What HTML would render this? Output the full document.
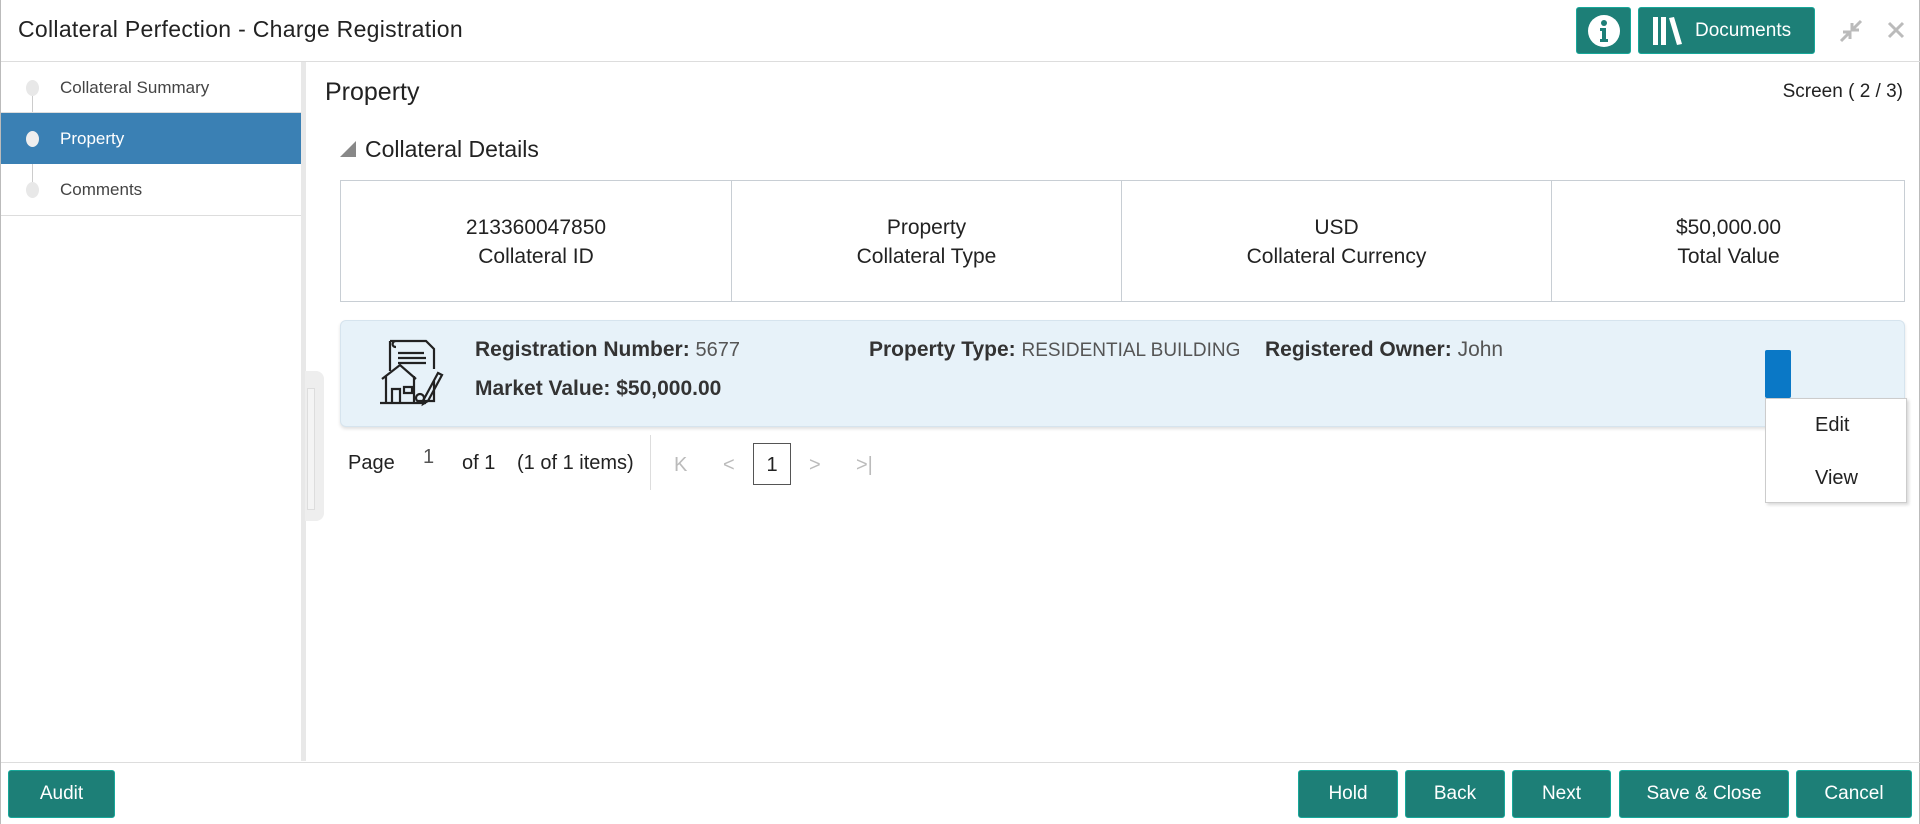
<!DOCTYPE html>
<html><head><style>
*{box-sizing:border-box;margin:0;padding:0}
body{width:1920px;height:824px;overflow:hidden;background:#fff;font-family:"Liberation Sans",sans-serif;color:#222;position:relative;border-left:1px solid #bbb;border-right:1px solid #bbb}
.a{position:absolute;white-space:nowrap}
.btn{position:absolute;background:#1d7f77;border:1px solid #17a89a;border-radius:3px;color:#fff;font-size:19px;display:flex;align-items:center;justify-content:center}
.cell{position:absolute;top:0;height:100%;text-align:center;font-size:21px;line-height:29px;padding-top:32px}
</style></head><body>
<div class="a" style="left:17px;top:16px;font-size:23px;color:#222;letter-spacing:0.3px">Collateral Perfection - Charge Registration</div>
<div class="btn" style="left:1575px;top:7px;width:55px;height:47px"><svg width="34" height="34" viewBox="0 0 34 34"><circle cx="17" cy="17" r="16" fill="#fff"/><circle cx="17" cy="9" r="3" fill="#1d7f77"/><path d="M13 14h6v11h2v3h-8v-3h2v-8h-2z" fill="#1d7f77"/></svg></div>
<div class="btn" style="left:1637px;top:7px;width:177px;height:47px;justify-content:flex-start;padding-left:14px"><svg width="32" height="30" viewBox="0 0 32 30"><rect x="0" y="1" width="5" height="28" fill="#fff"/><rect x="8" y="1" width="5" height="28" fill="#fff"/><path d="M16 2l5-1 8 27-5 1z" fill="#fff"/></svg><span style="margin-left:10px">Documents</span></div>
<svg class="a" style="left:1838px;top:19px" width="24" height="24" viewBox="0 0 24 24"><path d="M2 22l8-8M4 13h7v7M22 2l-8 8M13 4v7h7" stroke="#bbb" stroke-width="3" fill="none"/></svg>
<svg class="a" style="left:1886px;top:21px" width="18" height="18" viewBox="0 0 18 18"><path d="M2 2l14 14M16 2L2 16" stroke="#bbb" stroke-width="3"/></svg>
<div class="a" style="left:0;top:61px;width:1920px;height:1px;background:#ddd"></div>
<div class="a" style="left:300px;top:62px;width:5px;height:699px;background:#e8e8e8"></div>
<div class="a" style="left:31px;top:80px;width:1px;height:110px;background:#ccc"></div>
<div class="a" style="left:0;top:113px;width:300px;height:51px;background:#3a80b4"></div>
<div class="a" style="left:0;top:112px;width:300px;height:1px;background:#ddd"></div>
<div class="a" style="left:0;top:215px;width:300px;height:1px;background:#ddd"></div>
<div class="a" style="left:25px;top:80px;width:13px;height:16px;border-radius:50%;background:#e8e8e8"></div>
<div class="a" style="left:25px;top:131px;width:13px;height:16px;border-radius:50%;background:#eee"></div>
<div class="a" style="left:25px;top:182px;width:13px;height:16px;border-radius:50%;background:#e8e8e8"></div>
<div class="a" style="left:59px;top:78px;font-size:17px;color:#444">Collateral Summary</div>
<div class="a" style="left:59px;top:129px;font-size:17px;color:#fff">Property</div>
<div class="a" style="left:59px;top:180px;font-size:17px;color:#444">Comments</div>
<div class="a" style="left:304px;top:371px;width:19px;height:150px;background:#eee;border-radius:0 8px 8px 0"></div>
<div class="a" style="left:306px;top:388px;width:8px;height:122px;border:1px solid #ddd;background:#f4f4f4"></div>
<div class="a" style="left:324px;top:78px;font-size:25px;color:#222">Property</div>
<div class="a" style="right:16px;top:81px;font-size:19px;color:#222">Screen ( 2 / 3)</div>
<svg class="a" style="left:339px;top:141px" width="16" height="16"><path d="M16 0V16H0z" fill="#888"/></svg>
<div class="a" style="left:364px;top:136px;font-size:23px;color:#222">Collateral Details</div>
<div class="a" style="left:339px;top:180px;width:1565px;height:122px;border:1px solid #c8ced4">
 <div class="cell" style="left:0;width:390px">213360047850<br>Collateral ID</div>
 <div class="cell" style="left:390px;width:390px;border-left:1px solid #c8ced4">Property<br>Collateral Type</div>
 <div class="cell" style="left:780px;width:430px;border-left:1px solid #c8ced4">USD<br>Collateral Currency</div>
 <div class="cell" style="left:1210px;width:354px;border-left:1px solid #c8ced4">$50,000.00<br>Total Value</div>
</div>
<div class="a" style="left:339px;top:320px;width:1565px;height:107px;background:#e7f2f9;border:1px solid #d6e4ee;border-radius:6px;box-shadow:0 2px 3px rgba(0,0,0,.12)"></div>
<svg class="a" style="left:377px;top:337px" width="72" height="72" viewBox="0 0 72 72" fill="none" stroke="#222" stroke-width="2.2"><path d="M12 4h36l8 8v20M12 4v30M18 4c-4 0-5 6 0 6M20 16h26M20 21h28M20 26h28M56 44v20H40"/><path d="M4 42L22 28 38 42M8 39v27h28V39M14 66V52h8v14M26 50h8v6h-8zM2 66h46"/><path d="M46 62l14-26 4 2-14 26-5 3z"/><circle cx="42" cy="61" r="4"/></svg>
<div class="a" style="left:474px;top:338px;font-size:21px"><b style="color:#333">Registration Number:</b> <span style="color:#555;font-size:20px">5677</span></div>
<div class="a" style="left:474px;top:377px;font-size:21px;color:#333"><b>Market Value: $50,000.00</b></div>
<div class="a" style="left:868px;top:338px;font-size:21px"><b style="color:#333">Property Type:</b> <span style="color:#555;font-size:19px">RESIDENTIAL BUILDING</span></div>
<div class="a" style="left:1264px;top:338px;font-size:21px"><b style="color:#333">Registered Owner:</b> <span style="color:#555">John</span></div>
<div class="a" style="left:1764px;top:350px;width:26px;height:48px;background:#0a78c6;border-radius:2px"></div>
<div class="a" style="left:1764px;top:398px;width:142px;height:105px;background:#fff;border:1px solid #ccc;box-shadow:2px 2px 3px rgba(0,0,0,.15)"></div>
<div class="a" style="left:1814px;top:414px;font-size:20px">Edit</div>
<div class="a" style="left:1814px;top:467px;font-size:20px">View</div>
<div class="a" style="left:347px;top:452px;font-size:20px">Page</div>
<div class="a" style="left:422px;top:446px;font-size:20px;color:#555">1</div>
<div class="a" style="left:461px;top:452px;font-size:20px">of 1</div>
<div class="a" style="left:516px;top:452px;font-size:20px">(1 of 1 items)</div>
<div class="a" style="left:649px;top:435px;width:1px;height:55px;background:#ddd"></div>
<div class="a" style="left:673px;top:454px;font-size:20px;color:#bbb">K</div>
<div class="a" style="left:722px;top:454px;font-size:20px;color:#bbb">&lt;</div>
<div class="a" style="left:752px;top:443px;width:38px;height:42px;border:1px solid #555;font-size:20px;text-align:center;line-height:42px">1</div>
<div class="a" style="left:808px;top:454px;font-size:20px;color:#bbb">&gt;</div>
<div class="a" style="left:855px;top:454px;font-size:20px;color:#bbb">&gt;|</div>
<div class="a" style="left:0;top:762px;width:1920px;height:1px;background:#ddd"></div>
<div class="btn" style="left:7px;top:770px;width:107px;height:48px">Audit</div>
<div class="btn" style="left:1297px;top:770px;width:100px;height:48px">Hold</div>
<div class="btn" style="left:1404px;top:770px;width:100px;height:48px">Back</div>
<div class="btn" style="left:1511px;top:770px;width:99px;height:48px">Next</div>
<div class="btn" style="left:1618px;top:770px;width:170px;height:48px">Save &amp; Close</div>
<div class="btn" style="left:1795px;top:770px;width:116px;height:48px">Cancel</div>
</body></html>
